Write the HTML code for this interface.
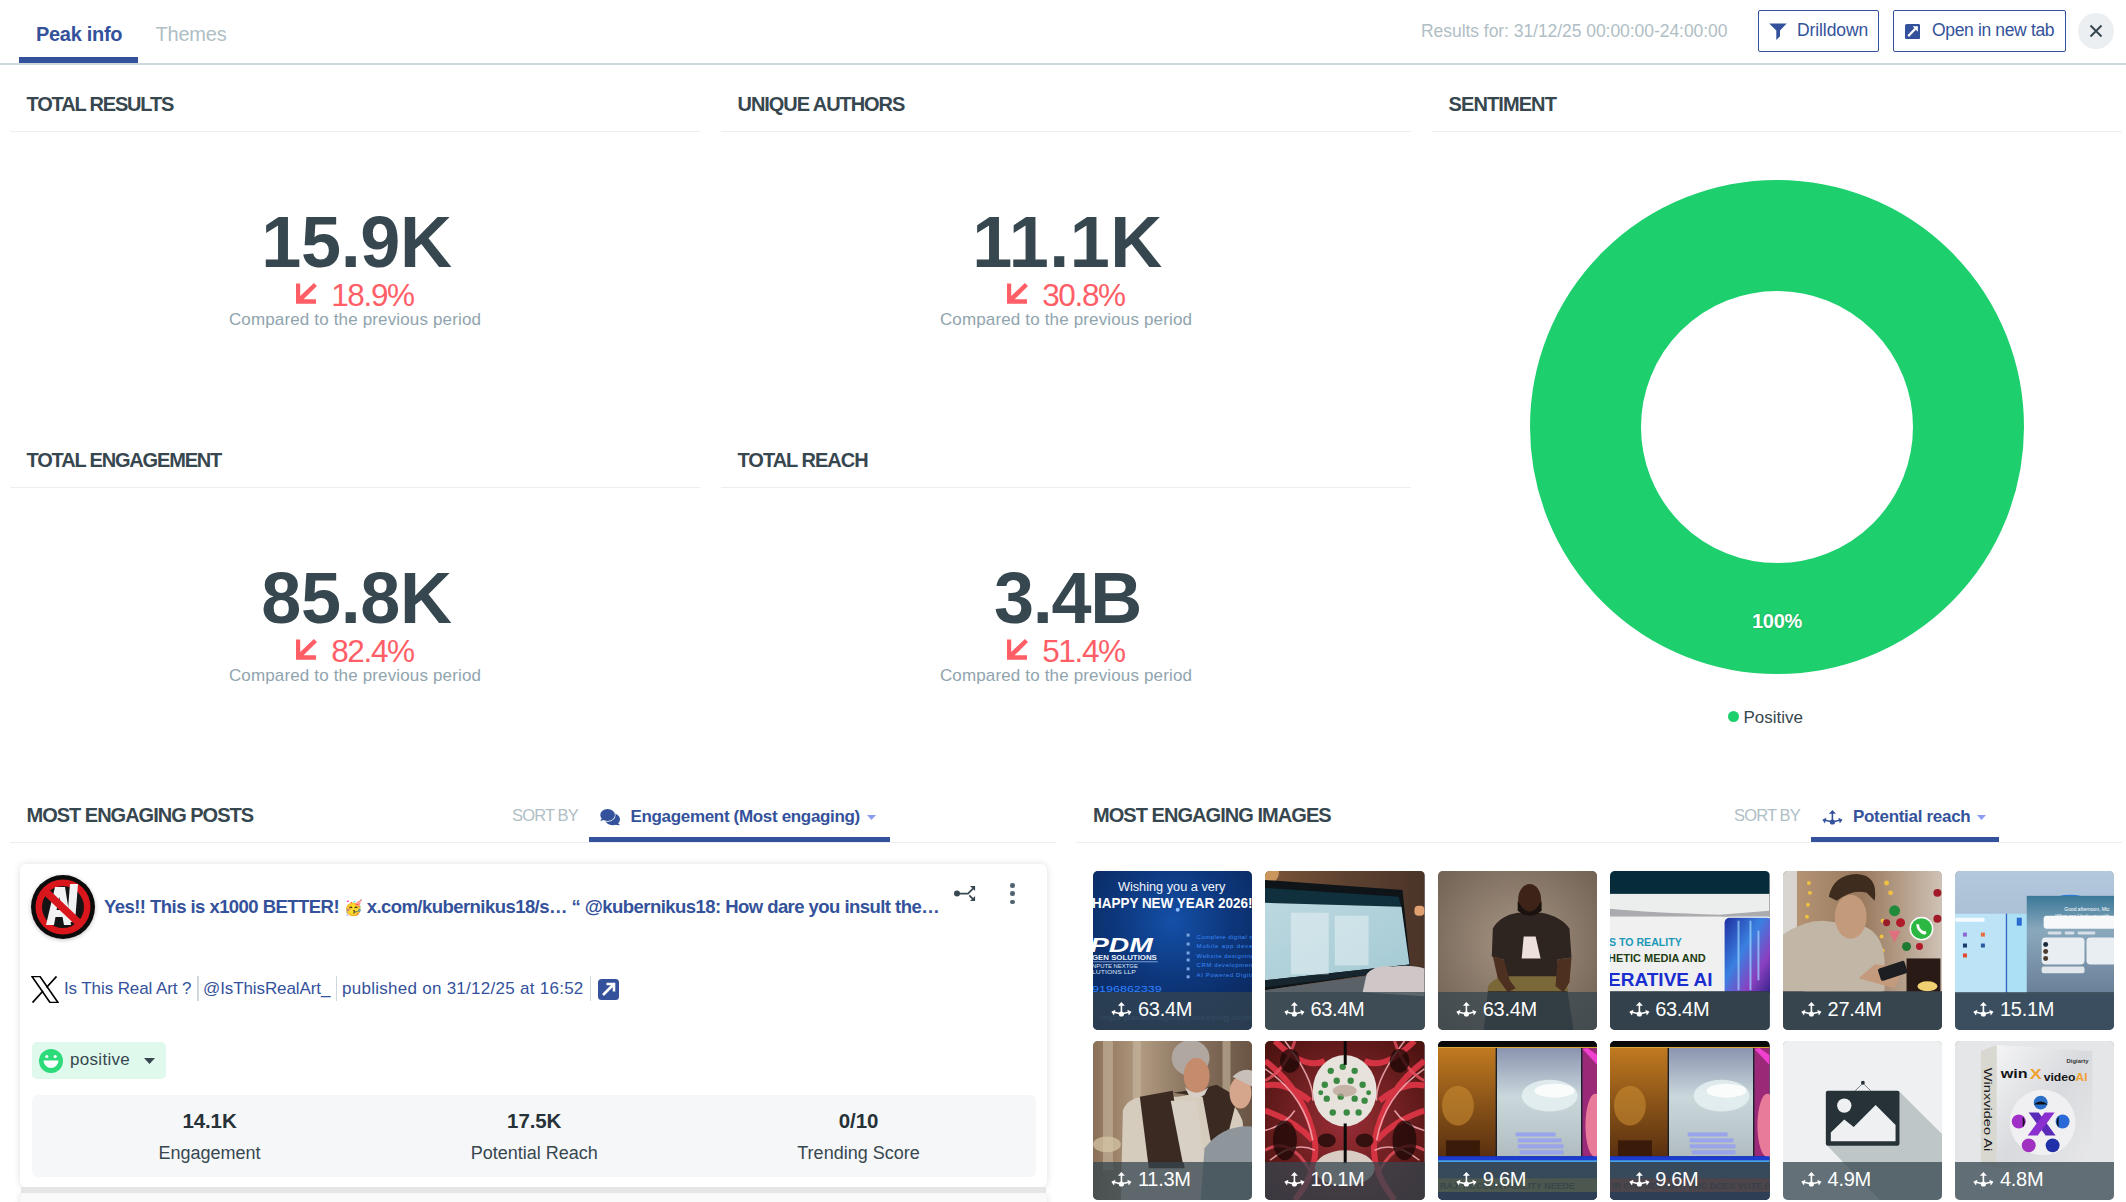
<!DOCTYPE html>
<html><head><meta charset="utf-8"><style>
html,body{margin:0;padding:0;background:#fff;width:2126px;height:1202px;overflow:hidden;position:relative;font-family:"Liberation Sans",sans-serif;color:#37474f}
.t{position:absolute;white-space:nowrap}
.img{position:absolute;width:159.4px;height:159px;border-radius:5px;overflow:hidden;background:#888}
.img .ov{position:absolute;left:0;right:0;bottom:0;height:38px;background:rgba(54,69,79,.75)}
.img svg{display:block}
</style></head><body>
<div class="t" style="left:36.00px;top:24.27px;font-size:20px;line-height:20px;font-weight:700;color:#34529b;letter-spacing:-0.3px;">Peak info</div>
<div class="t" style="left:155.50px;top:24.27px;font-size:20px;line-height:20px;color:#b0bec5;letter-spacing:-0.2px;">Themes</div>
<div style="position:absolute;left:19px;top:57px;width:119px;height:6px;background:#34529b"></div>
<div style="position:absolute;left:0px;top:63px;width:2126px;height:2px;background:#cfd8dc"></div>
<div class="t" style="left:1421.00px;top:23.19px;font-size:17.5px;line-height:17.5px;color:#b0bec5;letter-spacing:-0.05px;">Results for: 31/12/25 00:00:00-24:00:00</div>
<div style="position:absolute;left:1758px;top:10px;width:119px;height:40px;border:1px solid #34529b;border-radius:2px;background:#fff"></div>
<svg style="position:absolute;left:1769px;top:22.5px" width="18" height="18" viewBox="0 0 18 18"><path d="M0.2 0.4 H17.7 L11 7.6 V13.3 L7.3 17.1 V7.6 Z" fill="#34529b"/></svg>
<div class="t" style="left:1797.00px;top:22.39px;font-size:17.5px;line-height:17.5px;color:#34529b;letter-spacing:-0.1px;">Drilldown</div>
<div style="position:absolute;left:1893px;top:10px;width:171px;height:40px;border:1px solid #34529b;border-radius:2px;background:#fff"></div>
<svg style="position:absolute;left:1905.2px;top:23.8px" width="15.2" height="15.2" viewBox="0 0 15.2 15.2"><rect width="15.2" height="15.2" rx="1.8" fill="#34529b"/><path d="M7.8 2.2 H12.9 V7.7 L10.9 5.8 L4.0 12.9 L2.4 11.3 L9.3 4.3 Z" fill="#fff"/></svg>
<div class="t" style="left:1932.00px;top:22.39px;font-size:17.5px;line-height:17.5px;color:#34529b;letter-spacing:-0.35px;">Open in new tab</div>
<div style="position:absolute;left:2078px;top:13px;width:36px;height:36px;border-radius:50%;background:#eceff1"></div>
<svg style="position:absolute;left:2089px;top:24px" width="14" height="14" viewBox="0 0 14 14"><path d="M1.5 1.5 L12.5 12.5 M12.5 1.5 L1.5 12.5" stroke="#37474f" stroke-width="2"/></svg>
<div class="t" style="left:26.50px;top:94.47px;font-size:20px;line-height:20px;font-weight:700;letter-spacing:-1.17px;">TOTAL RESULTS</div>
<div style="position:absolute;left:10px;top:131px;width:690px;height:1px;background:#eceff1"></div>
<div class="t" style="left:737.50px;top:94.47px;font-size:20px;line-height:20px;font-weight:700;letter-spacing:-1.05px;">UNIQUE AUTHORS</div>
<div style="position:absolute;left:721px;top:131px;width:690px;height:1px;background:#eceff1"></div>
<div class="t" style="left:1448.50px;top:94.47px;font-size:20px;line-height:20px;font-weight:700;letter-spacing:-0.9px;">SENTIMENT</div>
<div style="position:absolute;left:1432px;top:131px;width:690px;height:1px;background:#eceff1"></div>
<div class="t" style="left:26.50px;top:450.47px;font-size:20px;line-height:20px;font-weight:700;letter-spacing:-1.17px;">TOTAL ENGAGEMENT</div>
<div style="position:absolute;left:10px;top:487px;width:690px;height:1px;background:#eceff1"></div>
<div class="t" style="left:737.50px;top:450.47px;font-size:20px;line-height:20px;font-weight:700;letter-spacing:-1.0px;">TOTAL REACH</div>
<div style="position:absolute;left:721px;top:487px;width:690px;height:1px;background:#eceff1"></div>
<div class="t" style="left:-243.50px;width:1200px;text-align:center;top:205.55px;font-size:72px;line-height:72px;font-weight:700;letter-spacing:-0.3px;">15.9K</div>
<div class="t" style="left:-245px;width:1200px;text-align:center;top:279.54px;font-size:31.5px;line-height:31.5px;color:#ff5e67;letter-spacing:-1.35px"><svg style="display:inline-block;vertical-align:baseline;margin-right:14px;position:relative;top:-1.5px" width="21" height="21" viewBox="0 0 21 21"><path d="M0 0.5 H4.2 V12.9 L17.9 0 L21 3 L7.6 16.3 H20 V20.7 H0 Z" fill="#ff5e67"/></svg>18.9%</div>
<div class="t" style="left:-245.00px;width:1200px;text-align:center;top:310.91px;font-size:17px;line-height:17px;color:#90a4ae;letter-spacing:0.15px;">Compared to the previous period</div>
<div class="t" style="left:467.50px;width:1200px;text-align:center;top:205.55px;font-size:72px;line-height:72px;font-weight:700;letter-spacing:0.45px;">11.1K</div>
<div class="t" style="left:466px;width:1200px;text-align:center;top:279.54px;font-size:31.5px;line-height:31.5px;color:#ff5e67;letter-spacing:-1.35px"><svg style="display:inline-block;vertical-align:baseline;margin-right:14px;position:relative;top:-1.5px" width="21" height="21" viewBox="0 0 21 21"><path d="M0 0.5 H4.2 V12.9 L17.9 0 L21 3 L7.6 16.3 H20 V20.7 H0 Z" fill="#ff5e67"/></svg>30.8%</div>
<div class="t" style="left:466.00px;width:1200px;text-align:center;top:310.91px;font-size:17px;line-height:17px;color:#90a4ae;letter-spacing:0.15px;">Compared to the previous period</div>
<div class="t" style="left:-243.50px;width:1200px;text-align:center;top:561.55px;font-size:72px;line-height:72px;font-weight:700;letter-spacing:-0.3px;">85.8K</div>
<div class="t" style="left:-245px;width:1200px;text-align:center;top:635.54px;font-size:31.5px;line-height:31.5px;color:#ff5e67;letter-spacing:-1.35px"><svg style="display:inline-block;vertical-align:baseline;margin-right:14px;position:relative;top:-1.5px" width="21" height="21" viewBox="0 0 21 21"><path d="M0 0.5 H4.2 V12.9 L17.9 0 L21 3 L7.6 16.3 H20 V20.7 H0 Z" fill="#ff5e67"/></svg>82.4%</div>
<div class="t" style="left:-245.00px;width:1200px;text-align:center;top:666.91px;font-size:17px;line-height:17px;color:#90a4ae;letter-spacing:0.15px;">Compared to the previous period</div>
<div class="t" style="left:467.50px;width:1200px;text-align:center;top:561.55px;font-size:72px;line-height:72px;font-weight:700;letter-spacing:-1.3px;">3.4B</div>
<div class="t" style="left:466px;width:1200px;text-align:center;top:635.54px;font-size:31.5px;line-height:31.5px;color:#ff5e67;letter-spacing:-1.35px"><svg style="display:inline-block;vertical-align:baseline;margin-right:14px;position:relative;top:-1.5px" width="21" height="21" viewBox="0 0 21 21"><path d="M0 0.5 H4.2 V12.9 L17.9 0 L21 3 L7.6 16.3 H20 V20.7 H0 Z" fill="#ff5e67"/></svg>51.4%</div>
<div class="t" style="left:466.00px;width:1200px;text-align:center;top:666.91px;font-size:17px;line-height:17px;color:#90a4ae;letter-spacing:0.15px;">Compared to the previous period</div>
<svg style="position:absolute;left:1527px;top:176.5px" width="500" height="500" viewBox="0 0 500 500"><circle cx="250" cy="250" r="191.5" fill="none" stroke="#1ecf6e" stroke-width="111"/></svg>
<div class="t" style="left:1177.00px;width:1200px;text-align:center;top:611.37px;font-size:20px;line-height:20px;font-weight:700;color:#ffffff;letter-spacing:-0.3px;text-shadow:0 0 2px rgba(0,80,30,.35);">100%</div>
<div style="position:absolute;left:1727.5px;top:710.8px;width:11px;height:11px;border-radius:50%;background:#1ecf6e"></div>
<div class="t" style="left:1743.50px;top:708.61px;font-size:17px;line-height:17px;">Positive</div>
<div class="t" style="left:26.50px;top:805.47px;font-size:20px;line-height:20px;font-weight:700;letter-spacing:-1.0px;">MOST ENGAGING POSTS</div>
<div class="t" style="left:512.00px;top:807.23px;font-size:16.5px;line-height:16.5px;color:#b0bec5;letter-spacing:-0.85px;">SORT BY</div>
<svg style="position:absolute;left:599px;top:808px" width="23" height="19" viewBox="0 0 23 19"><ellipse cx="13.6" cy="11.2" rx="7.4" ry="6" fill="#34529b"/><path d="M18.5 14.5 L21 17.3 L15.5 16.8 Z" fill="#34529b"/><ellipse cx="8.6" cy="7" rx="7.35" ry="6" fill="#34529b" stroke="#fff" stroke-width="1.3"/><ellipse cx="8.6" cy="7" rx="7.35" ry="6" fill="#34529b"/><path d="M3 10 L1.2 12.9 L5.5 11.8 Z" fill="#34529b"/></svg>
<div class="t" style="left:630.50px;top:808.21px;font-size:17px;line-height:17px;font-weight:700;color:#34529b;letter-spacing:-0.33px;">Engagement (Most engaging)</div>
<svg style="position:absolute;left:867px;top:815px" width="9" height="5" viewBox="0 0 9 5"><path d="M0 0 H9 L4.5 5 Z" fill="#8c9cf0"/></svg>
<div style="position:absolute;left:589px;top:837px;width:301px;height:6px;background:#34529b"></div>
<div style="position:absolute;left:10px;top:842px;width:1046px;height:1px;background:#eceff1"></div>
<div class="t" style="left:1093.00px;top:805.47px;font-size:20px;line-height:20px;font-weight:700;letter-spacing:-0.95px;">MOST ENGAGING IMAGES</div>
<div class="t" style="left:1734.00px;top:807.23px;font-size:16.5px;line-height:16.5px;color:#b0bec5;letter-spacing:-0.85px;">SORT BY</div>
<svg style="position:absolute;left:1822px;top:810px" width="21" height="15" viewBox="0 0 21 15"><g fill="#34529b"><circle cx="10.4" cy="12" r="2.6"/><rect x="9.6" y="3" width="1.6" height="9"/><path d="M10.4 0 L6.9 3.8 H13.9 Z M0.3 9.8 L4.4 7.7 L3.0 13.5 Z M20.5 9.8 L16.4 7.7 L17.8 13.5 Z"/><path d="M10.4 12 L2.5 10 M10.4 12 L18.3 10" stroke="#34529b" stroke-width="1.7"/></g></svg>
<div class="t" style="left:1853.00px;top:808.01px;font-size:17px;line-height:17px;font-weight:700;color:#34529b;letter-spacing:-0.3px;">Potential reach</div>
<svg style="position:absolute;left:1977px;top:815px" width="9" height="5" viewBox="0 0 9 5"><path d="M0 0 H9 L4.5 5 Z" fill="#8c9cf0"/></svg>
<div style="position:absolute;left:1811px;top:837px;width:188px;height:6px;background:#34529b"></div>
<div style="position:absolute;left:1076px;top:842px;width:1046px;height:1px;background:#eceff1"></div>
<div style="position:absolute;left:20px;top:1193px;width:1027px;height:40px;background:linear-gradient(#f9f9f9,#fdfdfd);border-radius:6px;box-shadow:0 0 7px rgba(0,0,0,.13)"></div>
<div style="position:absolute;left:20px;top:864px;width:1027px;height:323px;background:#fff;border-radius:6px;box-shadow:0 0 7px rgba(0,0,0,.13)"></div>
<div style="position:absolute;left:21px;top:1187px;width:1025px;height:6px;background:#e6e6e6"></div>
<div style="position:absolute;left:31px;top:875px;width:64px;height:64px;border-radius:50%;box-shadow:0 1px 4px rgba(0,0,0,.25)"></div>
<svg style="position:absolute;left:31px;top:875px" width="64" height="64" viewBox="0 0 64 64"><circle cx="32" cy="32" r="32" fill="#0b0b0b"/><circle cx="32" cy="32" r="27.5" fill="#d9161c"/><circle cx="32" cy="32" r="21" fill="#141414"/><path fill-rule="evenodd" d="M15 50 L24 12 L34 12 L40 50 L33 50 L31.5 42 L24.5 42 L23 50 Z M25.5 35 L30.5 35 L28.5 22 Z" fill="#f2f2f2"/><path d="M39 9 L47 9 L44 47 L36 47 Z" fill="#f2f2f2"/><path d="M14 16 L50 50" stroke="#d9161c" stroke-width="7.5"/></svg>
<div class="t" style="left:104.00px;top:898.34px;font-size:18.5px;line-height:18.5px;font-weight:700;color:#34529b;letter-spacing:-0.55px;">Yes!! This is x1000 BETTER! <span style="font-size:15px">🥳</span> x.com/kubernikus18/s… “ @kubernikus18: How dare you insult the…</div>
<svg style="position:absolute;left:953px;top:884px" width="24" height="19" viewBox="0 0 24 19"><circle cx="4" cy="9.6" r="3" fill="#37474f"/><path d="M4 9.6 H15 L20.5 4.1 M16.3 11.3 L20.8 15.8" stroke="#37474f" stroke-width="1.7" fill="none"/><path d="M22.1 2.1 H17 L22.1 7 Z M22.1 17 H17 L22.1 12 Z" fill="#37474f"/></svg>
<div style="position:absolute;left:1010.2px;top:883.0px;width:4.6px;height:4.6px;border-radius:50%;background:#4f6470"></div>
<div style="position:absolute;left:1010.2px;top:891.3px;width:4.6px;height:4.6px;border-radius:50%;background:#4f6470"></div>
<div style="position:absolute;left:1010.2px;top:899.6px;width:4.6px;height:4.6px;border-radius:50%;background:#4f6470"></div>
<svg style="position:absolute;left:31px;top:976px" width="28" height="27" viewBox="0 0 28 27"><path d="M1 0.5 H9 L27 26.5 H19 Z" fill="none" stroke="#000" stroke-width="1.6"/><path d="M25.5 0.5 L15.5 11.5 M12 15 L1.5 26.5" stroke="#000" stroke-width="1.8"/></svg>
<div class="t" style="left:64.00px;top:979.81px;font-size:17px;line-height:17px;color:#34529b;letter-spacing:-0.1px;">Is This Real Art ?</div>
<div style="position:absolute;left:197px;top:976px;width:1.5px;height:25px;background:#cfd8dc"></div>
<div class="t" style="left:203.00px;top:979.81px;font-size:17px;line-height:17px;color:#34529b;letter-spacing:-0.1px;">@IsThisRealArt_</div>
<div style="position:absolute;left:335.5px;top:976px;width:1.5px;height:25px;background:#cfd8dc"></div>
<div class="t" style="left:342.00px;top:979.81px;font-size:17px;line-height:17px;color:#34529b;letter-spacing:0.27px;">published on 31/12/25 at 16:52</div>
<div style="position:absolute;left:589.5px;top:976px;width:1.5px;height:25px;background:#cfd8dc"></div>
<svg style="position:absolute;left:598px;top:979px" width="21" height="21" viewBox="0 0 21 21"><rect width="21" height="21" rx="3.5" fill="#34529b"/><path d="M5 16 L14.5 6.5 M8.5 5 H16 V12.5" stroke="#fff" stroke-width="2.6" fill="none"/></svg>
<div style="position:absolute;left:32px;top:1042px;width:134px;height:36.5px;background:#dff9ec;border-radius:5px"></div>
<svg style="position:absolute;left:39px;top:1048.5px" width="24" height="24" viewBox="0 0 24 24"><circle cx="12" cy="12" r="12" fill="#2ddb7a"/><circle cx="7.8" cy="7.5" r="1.6" fill="#fff"/><circle cx="16.2" cy="7.5" r="1.6" fill="#fff"/><path d="M4.5 11.5 H19.5 A7.5 7.5 0 0 1 4.5 11.5 Z" fill="#fff"/></svg>
<div class="t" style="left:70.00px;top:1051.41px;font-size:17px;line-height:17px;letter-spacing:0.3px;">positive</div>
<svg style="position:absolute;left:144px;top:1058px" width="11" height="6" viewBox="0 0 11 6"><path d="M0 0 H11 L5.5 6 Z" fill="#37474f"/></svg>
<div style="position:absolute;left:32px;top:1095px;width:1004px;height:81.5px;background:#f6f7f9;border-radius:6px"></div>
<div class="t" style="left:-390.50px;width:1200px;text-align:center;top:1111.35px;font-size:20.5px;line-height:20.5px;font-weight:700;color:#263238;letter-spacing:-0.1px;">14.1K</div>
<div class="t" style="left:-390.50px;width:1200px;text-align:center;top:1143.56px;font-size:18px;line-height:18px;">Engagement</div>
<div class="t" style="left:-65.80px;width:1200px;text-align:center;top:1111.35px;font-size:20.5px;line-height:20.5px;font-weight:700;color:#263238;letter-spacing:-0.1px;">17.5K</div>
<div class="t" style="left:-65.80px;width:1200px;text-align:center;top:1143.56px;font-size:18px;line-height:18px;">Potential Reach</div>
<div class="t" style="left:258.50px;width:1200px;text-align:center;top:1111.35px;font-size:20.5px;line-height:20.5px;font-weight:700;color:#263238;letter-spacing:-0.1px;">0/10</div>
<div class="t" style="left:258.50px;width:1200px;text-align:center;top:1143.56px;font-size:18px;line-height:18px;">Trending Score</div>
<div class="img" style="left:1093.0px;top:871px"><svg width="100%" height="100%" viewBox="0 0 160 160" preserveAspectRatio="none"><defs><radialGradient id="g0" cx="0.5" cy="0.32" r="0.8"><stop offset="0" stop-color="#1450a8"/><stop offset="0.45" stop-color="#0d377c"/><stop offset="1" stop-color="#0a2454"/></radialGradient></defs>
<rect width="160" height="160" fill="url(#g0)"/>
<text x="25" y="20.5" font-size="12.5" fill="#f4f6fa" font-family="Liberation Sans" textLength="108" lengthAdjust="spacingAndGlyphs">Wishing you a very</text>
<text x="-1" y="37.5" font-size="14.2" font-weight="bold" fill="#fff" font-family="Liberation Sans" textLength="161" lengthAdjust="spacingAndGlyphs">HAPPY NEW YEAR 2026!</text>
<circle cx="85" cy="39" r="2" fill="#8ac0ff"/>
<text x="-3" y="82" font-size="20" font-weight="bold" font-style="italic" fill="#fff" font-family="Liberation Sans" textLength="63" lengthAdjust="spacingAndGlyphs">PDM</text>
<text x="-1" y="89.5" font-size="6.5" font-weight="bold" fill="#e8eef8" font-family="Liberation Sans" textLength="65" lengthAdjust="spacingAndGlyphs">GEN SOLUTIONS</text>
<rect x="0" y="91" width="65" height="0.8" fill="#9fb6e0"/>
<text x="-1" y="97.5" font-size="4.8" fill="#dfe6f2" font-family="Liberation Sans" textLength="46" lengthAdjust="spacingAndGlyphs">NPUTE NEXTGE</text>
<text x="-1" y="103.5" font-size="4.8" fill="#dfe6f2" font-family="Liberation Sans" textLength="44" lengthAdjust="spacingAndGlyphs">LUTIONS LLP</text>
<g fill="#3a8af8" font-family="Liberation Sans" font-size="6" lengthAdjust="spacingAndGlyphs"><text x="104" y="68.5" textLength="58">Complete digital m</text><text x="104" y="78" textLength="58">Mobile app devel</text><text x="104" y="87.5" textLength="58">Website designing</text><text x="104" y="97" textLength="58">CRM development</text><text x="104" y="106.5" textLength="58">AI Powered Digita</text></g>
<g fill="#7aa6e6"><rect x="94" y="63" width="3" height="3"/><rect x="94" y="72" width="3" height="3"/><rect x="94" y="81" width="3" height="3"/><rect x="94" y="88" width="3" height="3"/><rect x="94" y="97" width="3" height="3"/><rect x="94" y="105" width="3" height="3"/></g>
<text x="-1" y="121.5" font-size="9.5" fill="#2f82ff" font-family="Liberation Sans" textLength="70" lengthAdjust="spacingAndGlyphs">9196862339</text>
<text x="8" y="150" font-size="7" fill="#3a6aa8" font-family="Liberation Sans" opacity=".8" textLength="152" lengthAdjust="spacingAndGlyphs">htps  paramdigitalmarketing.com</text></svg><div class="ov"></div></div>
<svg style="position:absolute;left:1111.3px;top:1002px" width="21" height="15" viewBox="0 0 21 15"><g fill="#fff"><circle cx="10.4" cy="12" r="2.6"/><rect x="9.6" y="3" width="1.6" height="9"/><path d="M10.4 0 L6.9 3.8 H13.9 Z M0.3 9.8 L4.4 7.7 L3.0 13.5 Z M20.5 9.8 L16.4 7.7 L17.8 13.5 Z"/><path d="M10.4 12 L2.5 10 M10.4 12 L18.3 10" stroke="#fff" stroke-width="1.7"/></g></svg>
<div class="t" style="left:1138.00px;top:999.07px;font-size:20px;line-height:20px;color:#ffffff;letter-spacing:-0.3px;">63.4M</div>
<div class="img" style="left:1265.4px;top:871px"><svg width="100%" height="100%" viewBox="0 0 160 160" preserveAspectRatio="none"><defs><linearGradient id="g1a" x1="0" y1="0" x2="1" y2="0"><stop offset="0" stop-color="#7a5438"/><stop offset="0.5" stop-color="#5e4230"/><stop offset="1" stop-color="#4a3428"/></linearGradient>
<linearGradient id="g1b" x1="0" y1="0" x2="1" y2="1"><stop offset="0" stop-color="#bcd8e0"/><stop offset="1" stop-color="#a4cad4"/></linearGradient></defs>
<rect width="160" height="160" fill="url(#g1a)"/>
<circle cx="4" cy="2" r="10" fill="#e0a868" opacity=".8"/>
<path d="M0 9 L138 19 L146 98 L0 120 Z" fill="#0e1418"/>
<path d="M0 17 L134 26 L137 36 L0 32 Z" fill="#10303e"/>
<path d="M0 32 L137 36 L145 94 L0 110 Z" fill="url(#g1b)"/>
<path d="M0 110 L145 94 L146 99 L0 117 Z" fill="#17262e"/>
<g fill="#e6f1f4" opacity=".55"><rect x="26" y="42" width="38" height="62"/><rect x="70" y="45" width="34" height="50"/></g>
<path d="M0 120 L146 99 L160 104 L160 160 L0 160 Z" fill="#5a6268"/>
<path d="M102 104 Q110 94 128 96 Q148 94 160 98 L160 126 L98 122 Z" fill="#cfc6c8"/>
<rect x="150" y="35" width="10" height="10" rx="4" fill="#e0a070"/></svg><div class="ov"></div></div>
<svg style="position:absolute;left:1283.7px;top:1002px" width="21" height="15" viewBox="0 0 21 15"><g fill="#fff"><circle cx="10.4" cy="12" r="2.6"/><rect x="9.6" y="3" width="1.6" height="9"/><path d="M10.4 0 L6.9 3.8 H13.9 Z M0.3 9.8 L4.4 7.7 L3.0 13.5 Z M20.5 9.8 L16.4 7.7 L17.8 13.5 Z"/><path d="M10.4 12 L2.5 10 M10.4 12 L18.3 10" stroke="#fff" stroke-width="1.7"/></g></svg>
<div class="t" style="left:1310.40px;top:999.07px;font-size:20px;line-height:20px;color:#ffffff;letter-spacing:-0.3px;">63.4M</div>
<div class="img" style="left:1437.8px;top:871px"><svg width="100%" height="100%" viewBox="0 0 160 160" preserveAspectRatio="none"><defs><radialGradient id="g2" cx="0.5" cy="0.45" r="0.75"><stop offset="0" stop-color="#a69584"/><stop offset="1" stop-color="#6c5c4e"/></radialGradient></defs>
<rect width="160" height="160" fill="url(#g2)"/>
<path d="M72 130 L62 88 L58 80 L70 98 L75 116 Z" fill="#5a3a26"/>
<path d="M124 88 L130 120 L118 128 L112 100 Z" fill="#5a3a26"/>
<path d="M50 116 Q60 102 90 104 Q120 100 130 114 L130 160 L50 160 Z" fill="#7a6838"/>
<path d="M55 58 Q62 45 80 42 L104 42 Q124 46 132 58 L134 87 L120 89 L120 106 L66 106 L66 89 L54 86 Z" fill="#2e2520"/>
<path d="M55 86 L66 89 L72 110 L78 118 L70 122 L60 108 Z" fill="#4e3020"/>
<path d="M120 89 L134 87 L132 112 L126 122 L118 116 Z" fill="#4e3020"/>
<ellipse cx="92" cy="29" rx="11.5" ry="16" fill="#3e2418"/>
<path d="M80 30 Q92 52 104 30 L104 40 Q92 50 80 40 Z" fill="#1a120e"/>
<path d="M86 66 L98 66 L103 88 L84 88 Z" fill="#eee0dc"/>
<path d="M50 121 L130 121 L136 160 L46 160 Z" fill="#2a2624"/></svg><div class="ov"></div></div>
<svg style="position:absolute;left:1456.1px;top:1002px" width="21" height="15" viewBox="0 0 21 15"><g fill="#fff"><circle cx="10.4" cy="12" r="2.6"/><rect x="9.6" y="3" width="1.6" height="9"/><path d="M10.4 0 L6.9 3.8 H13.9 Z M0.3 9.8 L4.4 7.7 L3.0 13.5 Z M20.5 9.8 L16.4 7.7 L17.8 13.5 Z"/><path d="M10.4 12 L2.5 10 M10.4 12 L18.3 10" stroke="#fff" stroke-width="1.7"/></g></svg>
<div class="t" style="left:1482.80px;top:999.07px;font-size:20px;line-height:20px;color:#ffffff;letter-spacing:-0.3px;">63.4M</div>
<div class="img" style="left:1610.2px;top:871px"><svg width="100%" height="100%" viewBox="0 0 160 160" preserveAspectRatio="none"><rect width="160" height="160" fill="#eceded"/>
<rect width="160" height="23" fill="#062b3b"/>
<path d="M0 38 Q40 42 110 44 L160 40 L160 46 L0 46 Z" fill="#9a9a9e" opacity=".8"/>
<rect x="0" y="46" width="112" height="76" fill="#f0f0f0"/>
<text x="-1" y="75" font-size="11" font-weight="bold" fill="#1b98b8" font-family="Liberation Sans" textLength="73" lengthAdjust="spacingAndGlyphs">S TO REALITY</text>
<text x="-2" y="92" font-size="10.5" font-weight="bold" fill="#203c12" font-family="Liberation Sans" textLength="98" lengthAdjust="spacingAndGlyphs">HETIC MEDIA AND</text>
<text x="-2" y="116" font-size="18" font-weight="bold" fill="#1a2ed0" font-family="Liberation Sans" textLength="105" lengthAdjust="spacingAndGlyphs">ERATIVE AI</text>
<defs><linearGradient id="g3" x1="0" y1="0" x2="1" y2="1"><stop offset="0" stop-color="#2030a0"/><stop offset="0.4" stop-color="#3a80e0"/><stop offset="0.7" stop-color="#8a40c0"/><stop offset="1" stop-color="#2a2080"/></linearGradient></defs>
<rect x="114" y="46" width="50" height="80" rx="6" fill="#fafafa"/>
<rect x="115" y="47" width="48" height="78" rx="5" fill="url(#g3)"/>
<g fill="#9fd8ff" opacity=".7"><rect x="128" y="50" width="2" height="70"/><rect x="140" y="50" width="2" height="70"/><rect x="148" y="60" width="2" height="50"/></g>
<rect x="0" y="121" width="160" height="39" fill="#2a3640"/></svg><div class="ov"></div></div>
<svg style="position:absolute;left:1628.5px;top:1002px" width="21" height="15" viewBox="0 0 21 15"><g fill="#fff"><circle cx="10.4" cy="12" r="2.6"/><rect x="9.6" y="3" width="1.6" height="9"/><path d="M10.4 0 L6.9 3.8 H13.9 Z M0.3 9.8 L4.4 7.7 L3.0 13.5 Z M20.5 9.8 L16.4 7.7 L17.8 13.5 Z"/><path d="M10.4 12 L2.5 10 M10.4 12 L18.3 10" stroke="#fff" stroke-width="1.7"/></g></svg>
<div class="t" style="left:1655.20px;top:999.07px;font-size:20px;line-height:20px;color:#ffffff;letter-spacing:-0.3px;">63.4M</div>
<div class="img" style="left:1782.6px;top:871px"><svg width="100%" height="100%" viewBox="0 0 160 160" preserveAspectRatio="none"><defs><linearGradient id="g4" x1="0" y1="0" x2="1" y2="0"><stop offset="0" stop-color="#b89878"/><stop offset="0.5" stop-color="#9a7a5e"/><stop offset="1" stop-color="#cfc2b6"/></linearGradient></defs>
<rect width="160" height="160" fill="url(#g4)"/>
<rect x="0" y="0" width="14" height="160" fill="#d8d4d0"/>
<g fill="#f0c040"><circle cx="26" cy="12" r="2"/><circle cx="27" cy="22" r="2"/><circle cx="25" cy="34" r="2"/><circle cx="24" cy="46" r="2"/><circle cx="104" cy="12" r="2.5"/><circle cx="108" cy="22" r="2.5"/><circle cx="100" cy="50" r="2"/><circle cx="99" cy="66" r="2"/><circle cx="100" cy="80" r="2"/></g>
<path d="M0 64 Q20 50 40 50 L80 55 Q100 62 102 90 L102 122 L0 122 Z" fill="#c2b6a6"/>
<ellipse cx="68" cy="46" rx="16" ry="22" fill="#c49a7c"/>
<path d="M46 26 Q50 4 74 3 Q96 4 92 30 L84 22 Q70 18 54 30 Z" fill="#3e2c1e"/>
<path d="M76 108 L92 94 L122 96 L112 118 Z" fill="#c49a7c"/>
<rect x="96" y="94" width="28" height="13" rx="2" fill="#1c1e22" transform="rotate(-18 110 100)"/>
<circle cx="112" cy="40" r="5.5" fill="#1e8a3a"/><circle cx="118" cy="52" r="4.5" fill="#b01a2a"/><circle cx="104" cy="52" r="3.5" fill="#9a1a2a"/><circle cx="124" cy="76" r="4.5" fill="#1e7a30"/><circle cx="137" cy="76" r="3.5" fill="#b01a2a"/>
<circle cx="155" cy="22" r="4" fill="#a01a2a"/><circle cx="155" cy="48" r="4" fill="#a01a2a"/>
<path d="M106 60 L118 60 L112 72 Z" fill="#e07080"/>
<circle cx="139" cy="58" r="12" fill="#fff"/><circle cx="139" cy="58" r="10.5" fill="#2bb741"/>
<path d="M134 53 Q133 58 139 63 Q142 65 144 63 L143 60 Q141 61 139 59 Q136 56 137 54 Z" fill="#fff"/>
<rect x="124" y="88" width="34" height="34" fill="#2a1a16"/>
<ellipse cx="145" cy="116" rx="10" ry="5" fill="#f0d070"/>
<path d="M0 121 L160 121 L160 160 L0 160 Z" fill="#3c444c"/><path d="M20 121 Q60 112 100 121 Z" fill="#c2b6a6"/></svg><div class="ov"></div></div>
<svg style="position:absolute;left:1800.9px;top:1002px" width="21" height="15" viewBox="0 0 21 15"><g fill="#fff"><circle cx="10.4" cy="12" r="2.6"/><rect x="9.6" y="3" width="1.6" height="9"/><path d="M10.4 0 L6.9 3.8 H13.9 Z M0.3 9.8 L4.4 7.7 L3.0 13.5 Z M20.5 9.8 L16.4 7.7 L17.8 13.5 Z"/><path d="M10.4 12 L2.5 10 M10.4 12 L18.3 10" stroke="#fff" stroke-width="1.7"/></g></svg>
<div class="t" style="left:1827.60px;top:999.07px;font-size:20px;line-height:20px;color:#ffffff;letter-spacing:-0.3px;">27.4M</div>
<div class="img" style="left:1955.0px;top:871px"><svg width="100%" height="100%" viewBox="0 0 160 160" preserveAspectRatio="none"><defs><linearGradient id="g5" x1="0" y1="0" x2="0" y2="1"><stop offset="0" stop-color="#b4c8dc"/><stop offset="1" stop-color="#94acc4"/></linearGradient>
<linearGradient id="g5b" x1="0" y1="0" x2="0" y2="1"><stop offset="0" stop-color="#3a7898"/><stop offset="0.35" stop-color="#8aa8bc"/><stop offset="1" stop-color="#6a8098"/></linearGradient></defs>
<rect width="160" height="160" fill="url(#g5)"/>
<path d="M92 30 Q115 18 140 30 L140 40 L92 40 Z" fill="#2a7ae0"/>
<rect x="0" y="43" width="52" height="80" fill="#bce4f6"/>
<rect x="51" y="43" width="1.5" height="80" fill="#2f66c8"/>
<rect x="52.5" y="43" width="24" height="80" fill="#ace0f4"/>
<rect x="0" y="47" width="30" height="4" rx="2" fill="#f4fafe"/>
<g><rect x="8" y="62" width="4" height="4" fill="#8a6ad0"/><rect x="26" y="62" width="4" height="4" fill="#e87040"/><rect x="8" y="73" width="4" height="4" fill="#1a3a6a"/><rect x="26" y="73" width="4" height="4" fill="#2a5aa0"/><rect x="8" y="83" width="4" height="4" fill="#e04a30"/><rect x="62" y="47" width="5" height="8" fill="#2a6ad0"/></g>
<rect x="72" y="25" width="90" height="98" fill="url(#g5b)"/>
<text x="155" y="40" font-size="5" fill="#fff" font-family="Liberation Sans" text-anchor="end">Good afternoon, Mic</text>
<text x="155" y="47" font-size="5" fill="#fff" font-family="Liberation Sans" text-anchor="end">What can I help you with</text>
<rect x="89" y="45" width="73" height="13" rx="3" fill="#f6f8fa"/>
<g fill="#dfe6ec" opacity=".9"><rect x="93" y="61" width="14" height="3" rx="1.5"/><rect x="110" y="61" width="10" height="3" rx="1.5"/><rect x="123" y="61" width="18" height="3" rx="1.5"/></g>
<rect x="87" y="67" width="43" height="27" rx="4" fill="#eef2f6" opacity=".95"/>
<rect x="132" y="67" width="30" height="27" rx="4" fill="#eef2f6" opacity=".95"/>
<circle cx="91" cy="74" r="2.5" fill="#1a2a3a"/><circle cx="91" cy="81" r="2.5" fill="#4a3a30"/><circle cx="91" cy="88" r="2.5" fill="#4a3a30"/>
<rect x="87" y="96" width="43" height="7" rx="2" fill="#e0e6ea"/>
<rect x="0" y="123" width="160" height="37" fill="#4a6a90"/></svg><div class="ov"></div></div>
<svg style="position:absolute;left:1973.3px;top:1002px" width="21" height="15" viewBox="0 0 21 15"><g fill="#fff"><circle cx="10.4" cy="12" r="2.6"/><rect x="9.6" y="3" width="1.6" height="9"/><path d="M10.4 0 L6.9 3.8 H13.9 Z M0.3 9.8 L4.4 7.7 L3.0 13.5 Z M20.5 9.8 L16.4 7.7 L17.8 13.5 Z"/><path d="M10.4 12 L2.5 10 M10.4 12 L18.3 10" stroke="#fff" stroke-width="1.7"/></g></svg>
<div class="t" style="left:2000.00px;top:999.07px;font-size:20px;line-height:20px;color:#ffffff;letter-spacing:-0.3px;">15.1M</div>
<div class="img" style="left:1093.0px;top:1041px"><svg width="100%" height="100%" viewBox="0 0 160 160" preserveAspectRatio="none"><defs><linearGradient id="g6" x1="0" y1="0" x2="1" y2="0"><stop offset="0" stop-color="#8a7058"/><stop offset="0.3" stop-color="#b09a80"/><stop offset="0.6" stop-color="#8a7460"/><stop offset="1" stop-color="#6a5444"/></linearGradient></defs>
<rect width="160" height="160" fill="url(#g6)"/>
<g fill="#c8b8a0" opacity=".6"><rect x="10" y="0" width="10" height="130"/><rect x="40" y="0" width="8" height="60"/><rect x="130" y="0" width="8" height="60"/></g>
<ellipse cx="14" cy="104" rx="14" ry="8" fill="#d8c8a8" opacity=".7"/>
<path d="M30 70 Q34 58 50 56 L85 56 L120 50 Q140 56 150 80 L160 160 L28 160 Z" fill="#d6ccbe"/>
<path d="M47 56 L80 50 L92 128 L56 128 Z" fill="#3a2a22"/>
<path d="M80 52 L108 48 L124 44 L145 56 L132 108 L118 100 L110 56 Z" fill="#3a2a22"/>
<path d="M78 60 L104 60 L112 122 L90 122 Z" fill="#d8d0c4"/>
<ellipse cx="98" cy="17" rx="19" ry="18" fill="#b0a8a0"/>
<ellipse cx="104" cy="35" rx="13" ry="18" fill="#c48c6c"/>
<path d="M92 46 Q104 58 116 46 L112 54 Q104 60 96 54 Z" fill="#d8d0c8"/>
<ellipse cx="148" cy="52" rx="11" ry="16" fill="#d6a68c"/>
<path d="M140 36 Q150 26 160 30 L160 46 Z" fill="#c8c0b8"/>
<path d="M112 108 Q130 84 160 86 L160 160 L108 160 Z" fill="#8e969c"/></svg><div class="ov"></div></div>
<svg style="position:absolute;left:1111.3px;top:1172px" width="21" height="15" viewBox="0 0 21 15"><g fill="#fff"><circle cx="10.4" cy="12" r="2.6"/><rect x="9.6" y="3" width="1.6" height="9"/><path d="M10.4 0 L6.9 3.8 H13.9 Z M0.3 9.8 L4.4 7.7 L3.0 13.5 Z M20.5 9.8 L16.4 7.7 L17.8 13.5 Z"/><path d="M10.4 12 L2.5 10 M10.4 12 L18.3 10" stroke="#fff" stroke-width="1.7"/></g></svg>
<div class="t" style="left:1138.00px;top:1169.07px;font-size:20px;line-height:20px;color:#ffffff;letter-spacing:-0.3px;">11.3M</div>
<div class="img" style="left:1265.4px;top:1041px"><svg width="100%" height="100%" viewBox="0 0 160 160" preserveAspectRatio="none"><defs><radialGradient id="g7" cx="0.5" cy="0.5" r="0.7"><stop offset="0" stop-color="#9a3038"/><stop offset="1" stop-color="#4a1410"/></radialGradient></defs>
<rect width="160" height="160" fill="url(#g7)"/>
<g stroke="#e03848" stroke-width="6" fill="none" opacity=".9"><path d="M0 20 Q40 50 50 100 Q54 130 30 160"/><path d="M160 20 Q120 50 110 100 Q106 130 130 160"/><path d="M0 70 Q30 80 48 100"/><path d="M160 70 Q130 80 112 100"/><path d="M10 0 Q40 30 60 20"/><path d="M150 0 Q120 30 100 20"/><path d="M0 45 Q20 40 45 60"/><path d="M160 45 Q140 40 115 60"/></g>
<g stroke="#f4b0b8" stroke-width="1.6" fill="none" opacity=".85"><path d="M0 28 Q40 55 48 100"/><path d="M160 28 Q120 55 112 100"/><path d="M5 120 Q30 100 50 110"/><path d="M155 120 Q130 100 110 110"/><path d="M20 0 Q50 40 48 60"/><path d="M140 0 Q110 40 112 60"/><path d="M0 90 Q20 85 30 70"/><path d="M160 90 Q140 85 130 70"/></g>
<g stroke="#e85060" stroke-width="3" fill="none" opacity=".8"><path d="M0 110 Q25 95 45 130"/><path d="M160 110 Q135 95 115 130"/><path d="M30 0 Q20 30 0 40"/><path d="M130 0 Q140 30 160 40"/></g>
<g fill="#1a0806" opacity=".75"><ellipse cx="20" cy="100" rx="12" ry="20"/><ellipse cx="140" cy="100" rx="12" ry="20"/><ellipse cx="62" cy="100" rx="9" ry="7"/><ellipse cx="100" cy="100" rx="9" ry="7"/><ellipse cx="25" cy="20" rx="10" ry="12"/><ellipse cx="135" cy="20" rx="10" ry="12"/></g>
<ellipse cx="80" cy="50" rx="32" ry="36" fill="#e8e2dc"/>
<g fill="#3a8a44"><circle cx="66" cy="30" r="3.2"/><circle cx="78" cy="26" r="3.2"/><circle cx="90" cy="30" r="3.2"/><circle cx="60" cy="44" r="3.2"/><circle cx="72" cy="40" r="3.2"/><circle cx="86" cy="40" r="3.2"/><circle cx="98" cy="44" r="3.2"/><circle cx="62" cy="58" r="3.2"/><circle cx="76" cy="56" r="3.2"/><circle cx="90" cy="58" r="3.2"/><circle cx="100" cy="60" r="3.2"/><circle cx="68" cy="72" r="3.2"/><circle cx="82" cy="72" r="3.2"/><circle cx="94" cy="72" r="3.2"/><circle cx="56" cy="52" r="2.5"/><circle cx="104" cy="52" r="2.5"/></g>
<ellipse cx="80" cy="50" rx="12" ry="6" fill="#b8a090" opacity=".7"/>
<ellipse cx="80" cy="128" rx="30" ry="18" fill="#d8ccc4"/>
<rect x="79" y="0" width="3" height="24" fill="#0a0a0a"/><rect x="79" y="83" width="3" height="40" fill="#0a0a0a"/></svg><div class="ov"></div></div>
<svg style="position:absolute;left:1283.7px;top:1172px" width="21" height="15" viewBox="0 0 21 15"><g fill="#fff"><circle cx="10.4" cy="12" r="2.6"/><rect x="9.6" y="3" width="1.6" height="9"/><path d="M10.4 0 L6.9 3.8 H13.9 Z M0.3 9.8 L4.4 7.7 L3.0 13.5 Z M20.5 9.8 L16.4 7.7 L17.8 13.5 Z"/><path d="M10.4 12 L2.5 10 M10.4 12 L18.3 10" stroke="#fff" stroke-width="1.7"/></g></svg>
<div class="t" style="left:1310.40px;top:1169.07px;font-size:20px;line-height:20px;color:#ffffff;letter-spacing:-0.3px;">10.1M</div>
<div class="img" style="left:1437.8px;top:1041px"><svg width="100%" height="100%" viewBox="0 0 160 160" preserveAspectRatio="none"><rect width="160" height="160" fill="#1a2a50"/>
<rect width="160" height="7" fill="#080808"/><rect y="6" width="160" height="1.2" fill="#d8a838"/>
<defs><linearGradient id="gn8a8a50" x1="0" y1="0" x2="0" y2="1"><stop offset="0" stop-color="#c07a20"/><stop offset="0.5" stop-color="#8a5418"/><stop offset="1" stop-color="#5a3010"/></linearGradient></defs>
<rect x="0" y="7" width="58" height="109" fill="url(#gn8a8a50)"/>
<ellipse cx="20" cy="65" rx="16" ry="20" fill="#c88a30" opacity=".6"/>
<rect x="8" y="100" width="34" height="16" fill="#3a1a08"/>
<rect x="58" y="7" width="1.2" height="109" fill="#1a1a1a"/>
<defs><linearGradient id="gc8a8a50" x1="0" y1="0" x2="0" y2="1"><stop offset="0" stop-color="#8a94b0"/><stop offset="0.45" stop-color="#cad8dc"/><stop offset="1" stop-color="#b0bcc0"/></linearGradient></defs>
<rect x="59.2" y="7" width="84.5" height="109" fill="url(#gc8a8a50)"/>
<ellipse cx="112" cy="55" rx="28" ry="16" fill="#e8f2f4" opacity=".8"/><ellipse cx="117" cy="50" rx="20" ry="7" fill="#fafcfc"/>
<g fill="#9aa4ea"><rect x="78" y="92" width="40" height="4"/><rect x="80" y="98" width="44" height="4"/><rect x="80" y="104" width="46" height="4"/><rect x="82" y="110" width="44" height="4"/></g>
<rect x="143.7" y="7" width="1.2" height="109" fill="#1a1a1a"/>
<rect x="145" y="7" width="15" height="109" fill="#9a2a78"/>
<path d="M145 8 L160 24 L160 14 L150 7 Z" fill="#f040d0"/>
<ellipse cx="158" cy="85" rx="10" ry="32" fill="#e87a9a"/>
<rect x="0" y="116" width="160" height="4" fill="#1a3ad0"/><rect x="0" y="120" width="160" height="2" fill="#48a0f0"/>
<rect x="0" y="122" width="160" height="16" fill="#3a5a80"/>
<rect x="0" y="138" width="160" height="14" fill="#8a8a50"/>
<text x="2" y="149" font-size="9" font-weight="bold" fill="#2a2a2a" font-family="Liberation Sans" opacity=".7">RAJ: ACCOUNTABILITY NEEDE</text>
<rect x="0" y="152" width="160" height="8" fill="#1a2a6a"/></svg><div class="ov"></div></div>
<svg style="position:absolute;left:1456.1px;top:1172px" width="21" height="15" viewBox="0 0 21 15"><g fill="#fff"><circle cx="10.4" cy="12" r="2.6"/><rect x="9.6" y="3" width="1.6" height="9"/><path d="M10.4 0 L6.9 3.8 H13.9 Z M0.3 9.8 L4.4 7.7 L3.0 13.5 Z M20.5 9.8 L16.4 7.7 L17.8 13.5 Z"/><path d="M10.4 12 L2.5 10 M10.4 12 L18.3 10" stroke="#fff" stroke-width="1.7"/></g></svg>
<div class="t" style="left:1482.80px;top:1169.07px;font-size:20px;line-height:20px;color:#ffffff;letter-spacing:-0.3px;">9.6M</div>
<div class="img" style="left:1610.2px;top:1041px"><svg width="100%" height="100%" viewBox="0 0 160 160" preserveAspectRatio="none"><rect width="160" height="160" fill="#1a2a50"/>
<rect width="160" height="7" fill="#080808"/><rect y="6" width="160" height="1.2" fill="#d8a838"/>
<defs><linearGradient id="gn8e4444" x1="0" y1="0" x2="0" y2="1"><stop offset="0" stop-color="#c07a20"/><stop offset="0.5" stop-color="#8a5418"/><stop offset="1" stop-color="#5a3010"/></linearGradient></defs>
<rect x="0" y="7" width="58" height="109" fill="url(#gn8e4444)"/>
<ellipse cx="20" cy="65" rx="16" ry="20" fill="#c88a30" opacity=".6"/>
<rect x="8" y="100" width="34" height="16" fill="#3a1a08"/>
<rect x="58" y="7" width="1.2" height="109" fill="#1a1a1a"/>
<defs><linearGradient id="gc8e4444" x1="0" y1="0" x2="0" y2="1"><stop offset="0" stop-color="#8a94b0"/><stop offset="0.45" stop-color="#cad8dc"/><stop offset="1" stop-color="#b0bcc0"/></linearGradient></defs>
<rect x="59.2" y="7" width="84.5" height="109" fill="url(#gc8e4444)"/>
<ellipse cx="112" cy="55" rx="28" ry="16" fill="#e8f2f4" opacity=".8"/><ellipse cx="117" cy="50" rx="20" ry="7" fill="#fafcfc"/>
<g fill="#9aa4ea"><rect x="78" y="92" width="40" height="4"/><rect x="80" y="98" width="44" height="4"/><rect x="80" y="104" width="46" height="4"/><rect x="82" y="110" width="44" height="4"/></g>
<rect x="143.7" y="7" width="1.2" height="109" fill="#1a1a1a"/>
<rect x="145" y="7" width="15" height="109" fill="#9a2a78"/>
<path d="M145 8 L160 24 L160 14 L150 7 Z" fill="#f040d0"/>
<ellipse cx="158" cy="85" rx="10" ry="32" fill="#e87a9a"/>
<rect x="0" y="116" width="160" height="4" fill="#1a3ad0"/><rect x="0" y="120" width="160" height="2" fill="#48a0f0"/>
<rect x="0" y="122" width="160" height="16" fill="#3a5a80"/>
<rect x="0" y="138" width="160" height="14" fill="#8e4444"/>
<text x="2" y="149" font-size="9" font-weight="bold" fill="#2a2a2a" font-family="Liberation Sans" opacity=".7">IR CHOWDHURY: TMC DOES VOTE DACOITY</text>
<rect x="0" y="152" width="160" height="8" fill="#1a2a6a"/></svg><div class="ov"></div></div>
<svg style="position:absolute;left:1628.5px;top:1172px" width="21" height="15" viewBox="0 0 21 15"><g fill="#fff"><circle cx="10.4" cy="12" r="2.6"/><rect x="9.6" y="3" width="1.6" height="9"/><path d="M10.4 0 L6.9 3.8 H13.9 Z M0.3 9.8 L4.4 7.7 L3.0 13.5 Z M20.5 9.8 L16.4 7.7 L17.8 13.5 Z"/><path d="M10.4 12 L2.5 10 M10.4 12 L18.3 10" stroke="#fff" stroke-width="1.7"/></g></svg>
<div class="t" style="left:1655.20px;top:1169.07px;font-size:20px;line-height:20px;color:#ffffff;letter-spacing:-0.3px;">9.6M</div>
<div class="img" style="left:1782.6px;top:1041px"><svg width="100%" height="100%" viewBox="0 0 160 160" preserveAspectRatio="none"><rect width="160" height="160" fill="#eef0f1"/>
<path d="M117 51 L160 94 L160 160 L97 160 L44 105 L117 105 Z" fill="#bfc6c8"/>
<rect x="43" y="50" width="74" height="55.5" rx="2" fill="#263238"/>
<path d="M48 92 L61.5 79 L71 86.5 L93 64.5 L113 84.5 L113 101 L48 101 Z" fill="#eef0f1"/>
<circle cx="61.5" cy="65" r="7.2" fill="#eef0f1"/>
<circle cx="80.2" cy="42" r="1.9" fill="#263238"/>
<path d="M72.5 50 L80.2 42.5 L88 50" stroke="#263238" stroke-width="0.6" fill="none"/></svg><div class="ov"></div></div>
<svg style="position:absolute;left:1800.9px;top:1172px" width="21" height="15" viewBox="0 0 21 15"><g fill="#fff"><circle cx="10.4" cy="12" r="2.6"/><rect x="9.6" y="3" width="1.6" height="9"/><path d="M10.4 0 L6.9 3.8 H13.9 Z M0.3 9.8 L4.4 7.7 L3.0 13.5 Z M20.5 9.8 L16.4 7.7 L17.8 13.5 Z"/><path d="M10.4 12 L2.5 10 M10.4 12 L18.3 10" stroke="#fff" stroke-width="1.7"/></g></svg>
<div class="t" style="left:1827.60px;top:1169.07px;font-size:20px;line-height:20px;color:#ffffff;letter-spacing:-0.3px;">4.9M</div>
<div class="img" style="left:1955.0px;top:1041px"><svg width="100%" height="100%" viewBox="0 0 160 160" preserveAspectRatio="none"><rect width="160" height="160" fill="#e4e6e8"/>
<path d="M26 10 L42 4 L42 128 L26 124 Z" fill="#d8d8d0"/>
<text x="0" y="0" font-size="11" fill="#1a1a1a" font-family="Liberation Sans" transform="translate(29.5 27) rotate(90)" textLength="84" lengthAdjust="spacingAndGlyphs">Winxvideo Ai</text>
<defs><linearGradient id="g11" x1="0" y1="0" x2="1" y2="1"><stop offset="0" stop-color="#f4f4f6"/><stop offset="0.5" stop-color="#d8dadd"/><stop offset="1" stop-color="#e8e8ea"/></linearGradient></defs>
<path d="M42 4 L138 10 L138 124 L42 128 Z" fill="url(#g11)"/>
<text x="46" y="37" font-size="12" font-weight="bold" fill="#151515" font-family="Liberation Sans" textLength="27" lengthAdjust="spacingAndGlyphs">win</text>
<text x="75" y="38" font-size="14" font-weight="bold" fill="#f0a030" font-family="Liberation Sans" textLength="12" lengthAdjust="spacingAndGlyphs">X</text>
<text x="89" y="40" font-size="11" font-weight="bold" fill="#151515" font-family="Liberation Sans" textLength="32" lengthAdjust="spacingAndGlyphs">video</text>
<text x="121" y="40" font-size="11" font-weight="bold" fill="#f0a030" font-family="Liberation Sans" textLength="12" lengthAdjust="spacingAndGlyphs">AI</text>
<circle cx="88" cy="82" r="33" fill="#f0f0f2"/>
<circle cx="86" cy="62" r="7" fill="#2a70c8"/><circle cx="108" cy="81" r="7" fill="#2a6ad8"/><circle cx="64" cy="81" r="7" fill="#a030c8"/><circle cx="74" cy="105" r="7" fill="#a030c0"/><circle cx="98" cy="105" r="7" fill="#2030a8"/>
<path d="M74 72 L84 72 L101 95 L91 95 Z" fill="#5a2ab8"/><path d="M100 72 L90 72 L73 95 L83 95 Z" fill="#8a30d0"/>
<path d="M79 64 Q86 58 93 64 Z" fill="#111"/><path d="M104 76 Q100 81 104 87 Z" fill="#111"/><path d="M68 76 Q72 81 68 87 Z" fill="#111"/>
<text x="112" y="22" font-size="5.5" font-weight="bold" fill="#333" font-family="Liberation Sans" textLength="22" lengthAdjust="spacingAndGlyphs">Digiarty</text></svg><div class="ov"></div></div>
<svg style="position:absolute;left:1973.3px;top:1172px" width="21" height="15" viewBox="0 0 21 15"><g fill="#fff"><circle cx="10.4" cy="12" r="2.6"/><rect x="9.6" y="3" width="1.6" height="9"/><path d="M10.4 0 L6.9 3.8 H13.9 Z M0.3 9.8 L4.4 7.7 L3.0 13.5 Z M20.5 9.8 L16.4 7.7 L17.8 13.5 Z"/><path d="M10.4 12 L2.5 10 M10.4 12 L18.3 10" stroke="#fff" stroke-width="1.7"/></g></svg>
<div class="t" style="left:2000.00px;top:1169.07px;font-size:20px;line-height:20px;color:#ffffff;letter-spacing:-0.3px;">4.8M</div>
</body></html>
